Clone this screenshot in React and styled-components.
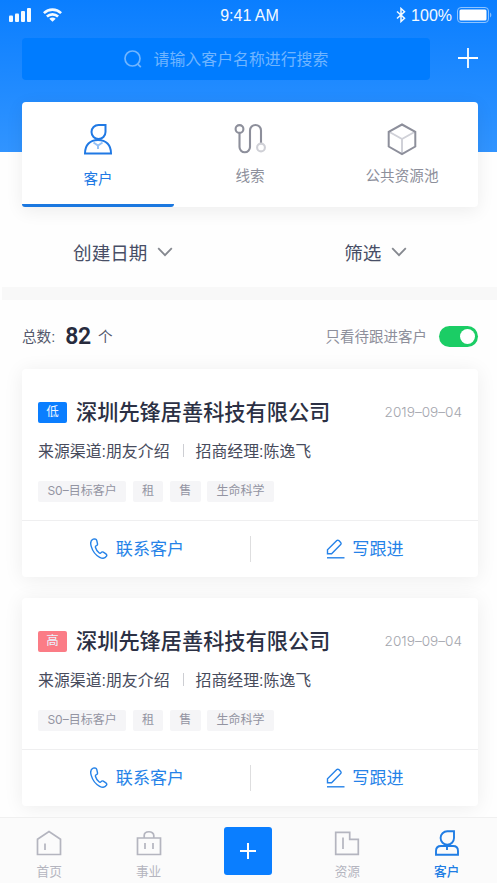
import React from "react";
import styled, { createGlobalStyle } from "styled-components";

const GlobalStyle = createGlobalStyle`
  * {
    box-sizing: border-box;
  }
  body {
    margin: 0;
    background: #fefefe;
    font-family: "Liberation Sans", "Noto Sans CJK SC", sans-serif;
    color: #2e3348;
  }
  button {
    border: none;
    padding: 0;
    background: none;
    font: inherit;
    color: inherit;
  }
`;

const Screen = styled.div`
  width: 497px;
  height: 883px;
  display: flex;
  flex-direction: column;
  overflow: hidden;
`;

/* header */
const Header = styled.header`
  height: 152px;
  flex: none;
  background: linear-gradient(#0a7eff, #3194ff);
`;
const StatusBar = styled.div`
  height: 30px;
  padding: 0 5px 0 9px;
  display: grid;
  grid-template-columns: 1fr auto 1fr;
  align-items: center;
  color: #f4faff;
  font-size: 16px;
  line-height: 32px;
`;
const StatusTime = styled.span`
  padding-right: 2px;
`;
const StatusLeft = styled.div`
  display: flex;
  align-items: center;
  gap: 11px;
  padding-bottom: 3px;
`;
const StatusRight = styled.div`
  display: flex;
  align-items: center;
  justify-content: flex-end;
  gap: 5px;

  svg {
    margin-bottom: 2px;
  }
`;
const SearchRow = styled.div`
  margin-top: 8px;
  padding: 0 19px 0 22px;
  display: flex;
  align-items: center;
  justify-content: space-between;
`;
const SearchBox = styled.div`
  width: 408px;
  height: 42px;
  border-radius: 4px;
  background: #007cff;
  display: flex;
  align-items: center;
  justify-content: center;
  gap: 12px;
  color: #70b5ff;
  font-size: 15.9px;

  span {
    padding-bottom: 1px;
  }
`;
const AddButton = styled.button`
  display: flex;
  margin-top: -2px;
`;

/* tabs */
const Tabs = styled.nav`
  flex: none;
  height: 105px;
  margin: -50px 19px 0 22px;
  border-radius: 4px;
  background: #fff;
  box-shadow: 0 4px 18px rgba(0, 0, 0, 0.07);
  display: grid;
  grid-template-columns: repeat(3, 1fr);
`;
const Tab = styled.div`
  display: flex;
  flex-direction: column;
  align-items: center;
  justify-content: flex-end;
  padding-bottom: ${props => (props.$active ? "14px" : "17px")};
  border-bottom: 3px solid ${props => (props.$active ? "#1b78e0" : "transparent")};
  border-radius: 3px;
  color: ${props => (props.$active ? "#2079e4" : "#8d8f9b")};
  font-size: 14.6px;
  line-height: 22px;

  svg {
    flex: none;
    margin-bottom: ${props => (props.$active ? "13px" : "9px")};
  }
`;

/* filters */
const Filters = styled.div`
  flex: none;
  height: 80px;
  padding-top: 9px;
  padding-left: 2px;
  display: grid;
  grid-template-columns: 1fr 1fr;
`;
const Filter = styled.div`
  display: flex;
  align-items: center;
  justify-content: center;
  gap: 10px;
  padding-left: ${props => props.$shift || 0}px;
  padding-right: ${props => props.$pull || 0}px;
  color: #484e66;
  font-size: 18.6px;
`;
const Band = styled.div`
  flex: none;
  height: 13px;
  margin-left: 2px;
  background: #f8f8f8;
`;

/* summary */
const Summary = styled.div`
  flex: none;
  height: 69px;
  padding: 4px 19px 0 22px;
  display: flex;
  align-items: center;
  justify-content: space-between;
`;
const SmallText = styled.span`
  padding-bottom: 2px;
`;
const Total = styled.div`
  display: flex;
  align-items: center;
  color: #55596d;
  font-size: 14.6px;
`;
const TotalNumber = styled.span`
  margin: 0 7px 0 10px;
  font-family: Roboto, sans-serif;
  font-size: 23px;
  font-weight: 600;
  letter-spacing: -0.3px;
  line-height: 28px;
  color: #272b3d;
`;
const Only = styled.div`
  display: flex;
  align-items: center;
  gap: 12px;
  color: #8d8f9b;
  font-size: 14.5px;
`;
const Toggle = styled.button`
  width: 39px;
  height: 21px;
  padding: 0 3px;
  border-radius: 11px;
  background: #1bcd65;
  display: flex;
  align-items: center;
  justify-content: flex-end;
`;
const Knob = styled.span`
  width: 15px;
  height: 15px;
  border-radius: 50%;
  background: #fff;
`;

/* customer cards */
const List = styled.main`
  flex: none;
  height: 448px;
  padding: 0 19px 0 22px;
  display: flex;
  flex-direction: column;
  gap: 21px;
`;
const Card = styled.article`
  flex: none;
  height: 208px;
  border-radius: 4px;
  background: #fff;
  box-shadow: 0 2px 20px rgba(0, 0, 0, 0.07);
`;
const CardBody = styled.div`
  height: 152px;
  padding: 29px 16px 0;
  border-bottom: 1px solid #efeff0;
`;
const TitleRow = styled.div`
  height: 29px;
  display: flex;
  align-items: center;
`;
const Level = styled.span`
  width: 29px;
  height: 21px;
  margin-right: 9px;
  border-radius: 2px;
  background: ${props => (props.$high ? "#fb7c86" : "#0a7eff")};
  color: #e9f4ff;
  font-size: 12.5px;
  line-height: 21px;
  text-align: center;
`;
const Company = styled.h2`
  margin: 0;
  font-size: 21.2px;
  font-weight: 500;
  line-height: 30px;
  color: #2b3044;
`;
const CardDate = styled.time`
  margin-left: auto;
  padding-bottom: 1px;
  font-family: Inter, sans-serif;
  font-size: 13.6px;
  font-weight: 300;
  color: #a3a5ad;
`;
const Meta = styled.div`
  height: 24px;
  margin-top: 11px;
  display: flex;
  align-items: center;
  color: #474b5c;
  font-size: 15.9px;
`;
const MetaLine = styled.i`
  width: 1px;
  height: 13px;
  margin: 0 12px 0 13px;
  background: #cdced3;
`;
const Tags = styled.div`
  margin-top: 19px;
  display: flex;
  gap: 6.5px;
`;
const TagItem = styled.span`
  height: 21px;
  padding: 0 9.4px;
  border-radius: 2px;
  background: #f5f5f7;
  color: #9394a2;
  font-family: Inter, "Noto Sans CJK SC", sans-serif;
  font-size: 12px;
  line-height: 20px;
`;
const Actions = styled.div`
  height: 56px;
  display: grid;
  grid-template-columns: 228px 1px 1fr;
  align-items: center;
`;
const Action = styled.button`
  display: flex;
  align-items: center;
  justify-content: center;
  gap: ${props => props.$gap}px;
  padding-left: ${props => props.$shift || 0}px;
  color: #2582e8;
  font-size: 17.1px;
  line-height: 24px;

  svg {
    margin-bottom: 1px;
  }
  span {
    padding-top: 2px;
  }
`;
const ActionLine = styled.i`
  height: 26px;
  background: #dededf;
`;

/* bottom bar */
const BottomBar = styled.footer`
  flex: none;
  height: 66px;
  z-index: 1;
  border-top: 1px solid #f0f0f0;
  background: #fbfbfb;
  display: grid;
  grid-template-columns: repeat(5, 99.4px);
`;
const BarItem = styled.div`
  display: flex;
  flex-direction: column;
  align-items: center;
  padding-top: 12px;
  padding-right: 1px;
  gap: 6px;
  color: ${props => (props.$active ? "#207de4" : "#b4b5bf")};
  font-size: 12.7px;
  font-weight: ${props => (props.$active ? 500 : 400)};
  line-height: 20px;
`;
const BigAdd = styled.button`
  width: 48px;
  height: 48px;
  margin-top: 9px;
  justify-self: center;
  border-radius: 3px;
  background: #0a7eff;
  display: flex;
  align-items: center;
  justify-content: center;
`;

const Svg = ({ w, h, sw = 1.7, children }) => (
  <svg width={w} height={h} viewBox={`0 0 ${w} ${h}`} fill="none" stroke="currentColor" strokeWidth={sw}>
    {children}
  </svg>
);

const SignalIcon = () => (
  <svg width="23" height="14" viewBox="0 0 23 14" fill="currentColor">
    <rect x="0" y="7.500" width="4" height="6.500" rx="1" />
    <rect x="6" y="5.500" width="4" height="8.500" rx="1" />
    <rect x="12" y="3" width="4" height="11" rx="1" />
    <rect x="18" y="0" width="4" height="14" rx="1" />
  </svg>
);
const WifiIcon = () => (
  <Svg w={19} h={14} sw={2.6}>
    <path d="M.9 5.100C5.700.5 13.300.5 18.100 5.100" />
    <path d="M3.900 8.500c3.200-2.900 8-2.900 11.200 0" />
    <path d="M6.300 10.700c1.800-1.500 4.600-1.500 6.400 0L9.500 13.800z" fill="currentColor" stroke="none" />
  </Svg>
);
const BluetoothIcon = () => (
  <Svg w={10} h={16} sw={1.5}>
    <path d="M1 4.500 8.500 11.300 5 14.500V1.500L8.500 4.700 1 11.500" />
  </Svg>
);
const BatteryIcon = () => (
  <svg width="35" height="16" viewBox="0 0 35 16" fill="none">
    <rect x=".5" y=".5" width="31" height="15" rx="3.500" stroke="#8fc4ff" />
    <rect x="2.500" y="2.500" width="27" height="11" rx="1.500" fill="#fff" />
    <path d="M33 5.500c1.800.7 1.800 4.300 0 5z" fill="#7dbaff" />
  </svg>
);
const SearchIcon = () => (
  <Svg w={18} h={18} sw={1.7}>
    <circle cx="8.500" cy="8.500" r="7.500" />
    <path d="m13.600 13.800 3.200 3.400" />
  </Svg>
);
const PlusIcon = ({ size, sw }) => (
  <svg width={size} height={size} viewBox="0 0 20 20" stroke="#fff" strokeWidth={sw}>
    <path d="M10 0v20M0 10h20" />
  </svg>
);
const CustomerIcon = () => (
  <Svg w={30} h={32} sw={2}>
    <path d="M22.500 2H15.500a7 7 0 1 0 7 7z" />
    <path d="M2 30.500h26C28 22 23 17 15 17S2 22 2 30.500z" />
    <path d="m10.500 19.500 4.500 3 4.500-3M15 22.500V26" stroke="#94c1f6" />
  </Svg>
);
const ClueIcon = () => (
  <Svg w={34} h={33} sw={2.100}>
    <circle cx="6.500" cy="6" r="3.900" />
    <path d="M6.500 10v14a5 5 0 0 0 10.500 0V7.500a5.500 5.500 0 0 1 11 0v13" />
    <circle cx="28" cy="24.500" r="3.900" stroke="#cfd0d6" />
  </Svg>
);
const CubeIcon = () => (
  <Svg w={30} h={33} sw={2}>
    <path d="M2.500 9 15 16v14M15 16l12.500-7" stroke="#d0d1d8" />
    <path d="M15 1.500 28.300 8.800v14.700L15 31 1.700 23.500V8.800z" />
  </Svg>
);
const ChevronIcon = () => (
  <svg width="16" height="10" viewBox="0 0 16 10" fill="none" stroke="#85888f" strokeWidth="1.800">
    <path d="m1.200 1.200 6.800 7 6.800-7" />
  </svg>
);
const PhoneIcon = () => (
  <Svg w={18} h={21} sw={1.400}>
    <path d="M3.200 1.200C.6 2.200.3 5.400 1.300 8.600c1.300 4.400 4.400 8.600 8.400 10.700 2.700 1.400 5.500 1 6.800-1.100.6-1 .2-1.700-.6-2.300l-2.600-1.700c-.9-.6-1.600-.3-2.200.4-.7.8-1.300.9-2.100.2-1.700-1.400-2.900-3.200-3.500-5.300-.3-1 0-1.500.9-1.800.9-.4 1.300-.9 1.100-1.900l-.7-3.100C6.500 1.300 5.200.6 3.200 1.200z" />
  </Svg>
);
const PenIcon = () => (
  <Svg w={19} h={20} sw={1.400}>
    <path d="M1.500 14.800V10.700L10.800 1.600a1.400 1.400 0 0 1 2 0l1.900 2a1.400 1.400 0 0 1 0 2L5.600 14.800z" />
    <path d="M1 18.800h17.500" />
  </Svg>
);
const HomeIcon = () => (
  <Svg w={26} h={26}>
    <path d="M1.500 9.200 13 1.500l11.500 7.700v15.300h-23zM9 13.500v6.500" />
  </Svg>
);
const BusinessIcon = () => (
  <Svg w={26} h={26}>
    <path d="M1.500 8h23v16.500h-23zM8.200 8V5.500c0-5 9.600-5 9.600 0V8M9 13v6M17 13v6" />
  </Svg>
);
const ResourceIcon = () => (
  <Svg w={26} h={26}>
    <path d="M1.700 2.300h14v7h8.600v15H1.700zM9 7.500v11.500" />
  </Svg>
);
const MineIcon = () => (
  <Svg w={26} h={26} sw={1.9}>
    <path d="M20 1.300H13.300a6.700 6.700 0 1 0 6.700 6.700z" />
    <path d="M2 24.800h22V21c0-3-2-5-5-5H7c-3 0-5 2-5 5zM13 16v4" />
  </Svg>
);

const customers = [
  { id: 1, high: false, level: "低" },
  { id: 2, high: true, level: "高" }
];
const tags = ["S0–目标客户", "租", "售", "生命科学"];

const CustomerCard = ({ customer }) => (
  <Card>
    <CardBody>
      <TitleRow>
        <Level $high={customer.high}>{customer.level}</Level>
        <Company>深圳先锋居善科技有限公司</Company>
        <CardDate>2019–09–04</CardDate>
      </TitleRow>
      <Meta>
        <span>来源渠道:朋友介绍</span>
        <MetaLine />
        <span>招商经理:陈逸飞</span>
      </Meta>
      <Tags>
        {tags.map(tag => (
          <TagItem key={tag}>{tag}</TagItem>
        ))}
      </Tags>
    </CardBody>
    <Actions>
      <Action $gap={8} $shift={2}>
        <PhoneIcon />
        <span>联系客户</span>
      </Action>
      <ActionLine />
      <Action $gap={7} $shift={1}>
        <PenIcon />
        <span>写跟进</span>
      </Action>
    </Actions>
  </Card>
);

const App = () => (
  <Screen>
    <GlobalStyle />
    <Header>
      <StatusBar>
        <StatusLeft>
          <SignalIcon />
          <WifiIcon />
        </StatusLeft>
        <StatusTime>9:41 AM</StatusTime>
        <StatusRight>
          <BluetoothIcon />
          <span>100%</span>
          <BatteryIcon />
        </StatusRight>
      </StatusBar>
      <SearchRow>
        <SearchBox>
          <SearchIcon />
          <span>请输入客户名称进行搜索</span>
        </SearchBox>
        <AddButton>
          <PlusIcon size={20} sw={1.8} />
        </AddButton>
      </SearchRow>
    </Header>
    <Tabs>
      <Tab $active>
        <CustomerIcon />
        客户
      </Tab>
      <Tab>
        <ClueIcon />
        线索
      </Tab>
      <Tab>
        <CubeIcon />
        公共资源池
      </Tab>
    </Tabs>
    <Filters>
      <Filter $pull={5}>
        创建日期
        <ChevronIcon />
      </Filter>
      <Filter $shift={5}>
        筛选
        <ChevronIcon />
      </Filter>
    </Filters>
    <Band />
    <Summary>
      <Total>
        <SmallText>总数:</SmallText>
        <TotalNumber>82</TotalNumber>
        <SmallText>个</SmallText>
      </Total>
      <Only>
        <SmallText>只看待跟进客户</SmallText>
        <Toggle>
          <Knob />
        </Toggle>
      </Only>
    </Summary>
    <List>
      {customers.map(customer => (
        <CustomerCard key={customer.id} customer={customer} />
      ))}
    </List>
    <BottomBar>
      <BarItem>
        <HomeIcon />
        首页
      </BarItem>
      <BarItem>
        <BusinessIcon />
        事业
      </BarItem>
      <BigAdd>
        <PlusIcon size={16} sw={2.5} />
      </BigAdd>
      <BarItem>
        <ResourceIcon />
        资源
      </BarItem>
      <BarItem $active>
        <MineIcon />
        客户
      </BarItem>
    </BottomBar>
  </Screen>
);

export default App;
